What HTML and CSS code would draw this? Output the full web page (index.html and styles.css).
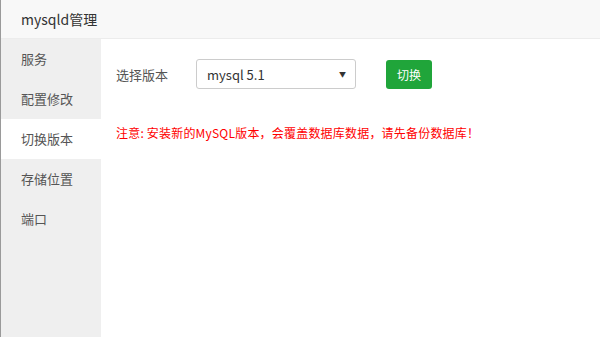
FILE: index.html
```html
<!DOCTYPE html>
<html lang="zh">
<head>
<meta charset="utf-8">
<title>mysqld管理</title>
<link rel="stylesheet" href="styles.css">
</head>
<body>
<div class="window">
  <div class="header">mysqld管理</div>
  <div class="main">
    <ul class="sidebar">
      <li class="item">服务</li>
      <li class="item">配置修改</li>
      <li class="item active">切换版本</li>
      <li class="item">存储位置</li>
      <li class="item">端口</li>
    </ul>
    <div class="content">
      <div class="row">
        <span class="label">选择版本</span>
        <div class="select">
          <span>mysql 5.1</span>
          <span class="arrow">▼</span>
        </div>
        <button class="btn">切换</button>
      </div>
      <p class="warn">注意: 安装新的MySQL版本，会覆盖数据库数据，请先备份数据库！</p>
    </div>
  </div>
</div>
</body>
</html>
```
FILE: styles.css
```css
html, body {
  margin: 0;
  padding: 0;
  width: 600px;
  height: 337px;
  overflow: hidden;
  background: #fff;
  font-family: "Microsoft YaHei", "Noto Sans CJK SC", "Open Sans", sans-serif;
}
.window {
  display: flex;
  flex-direction: column;
  height: 337px;
  border-left: 1px solid #9a9a9a;
  box-sizing: border-box;
}
.header {
  height: 39px;
  line-height: 38px;
  padding-left: 20px;
  font-size: 14px;
  color: #333;
  background: #f8f8f8;
  border-bottom: 1px solid #ececec;
  box-sizing: border-box;
  flex: none;
}
.main {
  flex: 1;
  display: flex;
}
.sidebar {
  list-style: none;
  margin: 0;
  padding: 0;
  width: 100px;
  background: #efefef;
  flex: none;
}
.item {
  height: 40px;
  line-height: 40px;
  padding-left: 20px;
  font-size: 13px;
  color: #555;
}
.item.active {
  background: #fff;
}
.content {
  flex: 1;
  padding: 20px 15px;
}
.row {
  display: flex;
  align-items: center;
  height: 30px;
}
.label {
  font-size: 13px;
  color: #555;
  width: 80px;
}
.select {
  width: 160px;
  height: 30px;
  box-sizing: border-box;
  border: 1px solid #ccc;
  border-radius: 3px;
  display: flex;
  align-items: center;
  justify-content: space-between;
  padding: 0 9px 0 10px;
  font-size: 13px;
  color: #333;
}
.arrow {
  font-size: 7px;
  color: #333;
}
.btn {
  margin-left: 30px;
  width: 46px;
  height: 29px;
  border: none;
  border-radius: 3px;
  background: #20a53a;
  color: #fff;
  font-size: 12px;
  font-family: inherit;
  padding: 0;
}
.warn {
  margin: 35px 0 0;
  font-size: 12px;
  letter-spacing: 0.2px;
  color: #f00;
}
```
